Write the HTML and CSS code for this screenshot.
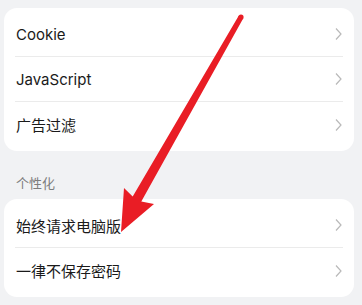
FILE: index.html
```html
<!DOCTYPE html>
<html lang="zh-CN">
<head>
    <meta charset="UTF-8">
    <meta name="viewport" content="width=device-width, initial-scale=1.0">
    <title>设置</title>
    <link rel="stylesheet" href="styles.css">
</head>
<body>
    <div class="page">
        <div class="card">
            <div class="row">
                <span class="label">Cookie</span>
                <svg class="chevron" viewBox="0 0 7 14"><path d="M1 1.5 L6 7 L1 12.5"/></svg>
            </div>
            <div class="row">
                <span class="label">JavaScript</span>
                <svg class="chevron" viewBox="0 0 7 14"><path d="M1 1.5 L6 7 L1 12.5"/></svg>
            </div>
            <div class="row">
                <span class="label">广告过滤</span>
                <svg class="chevron" viewBox="0 0 7 14"><path d="M1 1.5 L6 7 L1 12.5"/></svg>
            </div>
        </div>

        <div class="section-title">个性化</div>

        <div class="card">
            <div class="row">
                <span class="label">始终请求电脑版</span>
                <svg class="chevron" viewBox="0 0 7 14"><path d="M1 1.5 L6 7 L1 12.5"/></svg>
            </div>
            <div class="row">
                <span class="label">一律不保存密码</span>
                <svg class="chevron" viewBox="0 0 7 14"><path d="M1 1.5 L6 7 L1 12.5"/></svg>
            </div>
        </div>
    </div>

    <!-- red annotation arrow drawn over the list -->
    <svg class="arrow" viewBox="0 0 362 305" width="362" height="305">
        <circle cx="241" cy="17" r="2.6"/>
        <polygon points="243.3,18.3 141.3,201.5 154,204 121,232 124,188 132.7,196.5 238.7,15.7"/>
    </svg>
</body>
</html>
```

FILE: styles.css
```css
body {
    margin: 0;
    padding: 0;
    background: #f1f2f4;
    font-family: Inter, "Noto Sans CJK SC", sans-serif;
    color: #1a1a1a;
    position: relative;
    overflow: hidden;
}
.page {
    padding: 8px 8px 0 4px;
}
.card {
    background: #fff;
    border-radius: 13px;
    padding: 4px 0;
}
.row {
    height: 45px;
    margin: 0 11px;
    display: flex;
    align-items: center;
    justify-content: space-between;
    border-bottom: 1px solid #ebebeb;
    box-sizing: border-box;
}
.row:last-child {
    border-bottom: none;
}
.label {
    font-size: 15px;
    padding-left: 1px;
}
.chevron {
    width: 7px;
    height: 14px;
    margin-right: 1px;
    fill: none;
    stroke: #b9b9b9;
    stroke-width: 1.2;
}
.section-title {
    font-size: 13px;
    line-height: 16px;
    color: #7d7d7d;
    padding: 24px 12px 8px;
}
.arrow {
    position: absolute;
    top: 0;
    left: 0;
    pointer-events: none;
    fill: #e91d25;
}
```
